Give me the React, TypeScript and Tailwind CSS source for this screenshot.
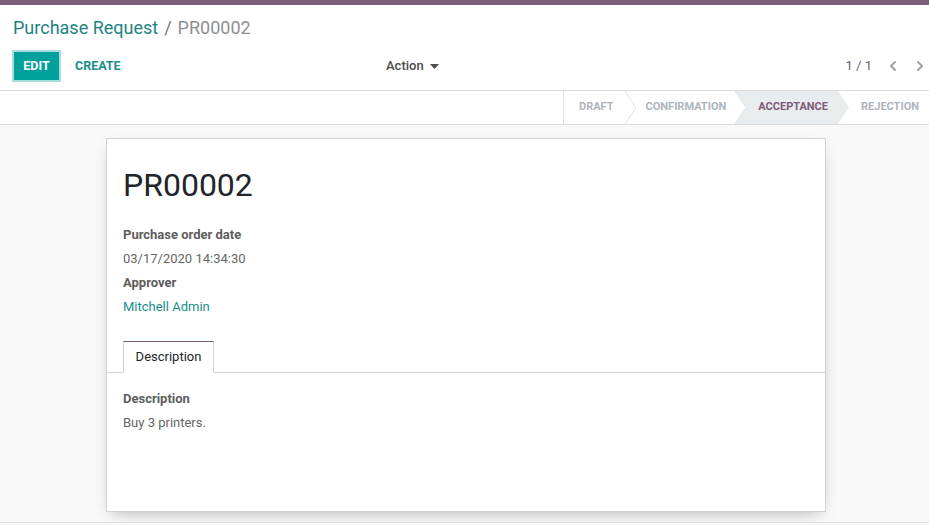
import { ChevronLeft, ChevronRight } from 'lucide-react';

const stages = [
  { key: 'draft', label: 'Draft', pl: 'pl-[15px]', pr: 'pr-[11px]' },
  { key: 'confirmation', label: 'Confirmation', pl: 'pl-[21px]', pr: 'pr-[9px]' },
  { key: 'acceptance', label: 'Acceptance', pl: 'pl-[23px]', pr: 'pr-[10px]' },
  { key: 'rejection', label: 'Rejection', pl: 'pl-[23px]', pr: 'pr-[10px]' },
];

const current = 'acceptance';

function StatusBar() {
  return (
    <div className="flex h-[34px] justify-end border-b border-[#dcdcdc] bg-white">
      <div className="flex h-full border-l border-[#dee2e6]">
        {stages.map((s, i) => {
          const active = s.key === current;
          const last = i === stages.length - 1;
          return (
            <div
              key={s.key}
              className={`relative flex h-full items-center ${s.pl} ${s.pr} text-[11px] font-bold uppercase ${
                active ? 'bg-[#e9ecef] text-[#7c5a77]' : 'text-[#adb5bd]'
              }`}
            >
              {s.label}
              {!last && (
                <svg className="absolute right-[-11px] top-0 z-10" width="11" height="33" viewBox="0 0 11 33">
                  {active ? (
                    <polygon points="0,0 11,16.5 0,33" fill="#e9ecef" />
                  ) : (
                    <polyline points="0,0 11,16.5 0,33" fill="white" stroke="#dee2e6" strokeWidth="1" />
                  )}
                </svg>
              )}
            </div>
          );
        })}
      </div>
    </div>
  );
}

export default function App() {
  return (
    <div className="flex h-[525px] flex-col bg-[#f9f9f9] font-['Roboto',sans-serif] text-[13px] text-[#4c4c4c]">
      <div className="h-[5px] bg-[#7c5d78]" />

      <div className="border-b border-[#dcdcdc] bg-white px-[13px] pb-[8px]">
        <div className="flex h-[36px] items-center pt-[9px] text-[18px]">
          <span className="text-[#21837f]">Purchase Request</span>
          <span className="px-[6px] text-[#777]">/</span>
          <span className="text-[#8f8f8f]">PR00002</span>
        </div>
        <div className="mt-[9px] flex h-[32px] items-center">
          <div className="flex w-[373px] items-center gap-[3px]">
            <button className="h-[32px] w-[49px] -ml-px border-[2px] border-[#a8dcda] bg-[#00a09d] text-[12.5px] font-bold text-white">
              EDIT
            </button>
            <button className="px-[11px] text-[12.5px] font-bold text-[#1a8f8b]">CREATE</button>
          </div>
          <button className="flex items-center gap-[6px] text-[13px] font-medium text-[#4c4c4c]">
            Action
            <svg width="9" height="5" viewBox="0 0 9 5">
              <polygon points="0,0 9,0 4.5,5" fill="#4c4c4c" />
            </svg>
          </button>
          <div className="-mr-[12px] ml-auto flex items-center text-[13px] text-[#5a6472]">
            <span className="mr-[8px]">1 / 1</span>
            <ChevronLeft size={16} strokeWidth={3} className="mx-[5px] text-[#a0a0a0]" />
            <ChevronRight size={16} strokeWidth={3} className="ml-[6px] text-[#a0a0a0]" />
          </div>
        </div>
      </div>

      <StatusBar />

      <div className="flex flex-1 justify-center pt-[13px]">
        <div className="ml-[3px] h-[374px] w-[720px] border border-[#d2d2d2] bg-white shadow-[0_6px_16px_-6px_rgba(0,0,0,0.3)]">
          <div className="px-[16px] pt-[26px]">
            <h1 className="text-[32px] leading-[40px] text-[#212529]">PR00002</h1>
            <div className="mt-[18px] leading-[24px]">
              <div className="font-bold text-[#5d5d5d]">Purchase order date</div>
              <div className="text-[#666]">03/17/2020 14:34:30</div>
              <div className="font-bold text-[#5d5d5d]">Approver</div>
              <div className="text-[#1a8f8b]">Mitchell Admin</div>
            </div>
          </div>

          <div className="mt-[22px] flex border-b border-[#cfd4da] px-[16px]">
            <div className="-mb-px flex h-[32px] w-[91px] items-center justify-center border border-b-white border-[#cfd4da] border-t-[#7c5d78] bg-white text-[13px] text-[#212529]">
              Description
            </div>
          </div>

          <div className="px-[16px] pt-[14px] leading-[24px]">
            <div className="font-bold text-[#5d5d5d]">Description</div>
            <div className="text-[#666]">Buy 3 printers.</div>
          </div>
        </div>
      </div>

      <div className="h-[3px] border-t border-[#dcdce4] bg-[#f9f9f9]" />
    </div>
  );
}
